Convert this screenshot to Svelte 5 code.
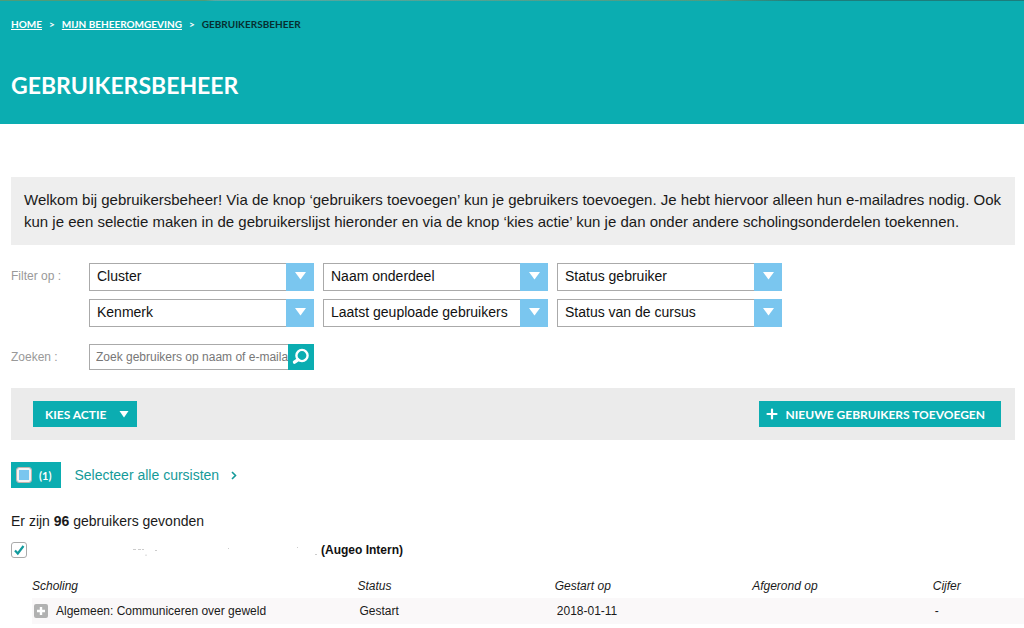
<script>
  const filters = [
    { id: 'cluster', label: 'Cluster' },
    { id: 'onderdeel', label: 'Naam onderdeel' },
    { id: 'status-gebruiker', label: 'Status gebruiker' },
    { id: 'kenmerk', label: 'Kenmerk' },
    { id: 'laatst', label: 'Laatst geuploade gebruikers' },
    { id: 'status-cursus', label: 'Status van de cursus' }
  ];
  const trainings = [
    { name: 'Algemeen: Communiceren over geweld', status: 'Gestart', started: '2018-01-11', finished: '', grade: '-' }
  ];
  let allSelected = $state(false);
  let userSelected = $state(true);
</script>

<header>
  <nav aria-label="Kruimelpad">
    <a href="#home">HOME</a>
    <span>&gt;</span>
    <a href="#beheer">MIJN BEHEEROMGEVING</a>
    <span>&gt;</span>
    <span class="current">GEBRUIKERSBEHEER</span>
  </nav>
  <h1>GEBRUIKERSBEHEER</h1>
</header>

<main>
  <p class="intro">
    Welkom bij gebruikersbeheer! Via de knop ‘gebruikers toevoegen’ kun je gebruikers toevoegen. Je hebt hiervoor alleen hun e-mailadres nodig. Ook kun je een selectie maken in de gebruikerslijst hieronder en via de knop ‘kies actie’ kun je dan onder andere scholingsonderdelen toekennen.
  </p>

  <div class="line">
    <span class="caption" id="filter-caption">Filter op :</span>
    <div class="filters" role="group" aria-labelledby="filter-caption">
      {#each filters as f (f.id)}
        <div class="select">
          <select id={f.id} aria-label={f.label}>
            <option>{f.label}</option>
          </select>
          <svg class="arrow" viewBox="0 0 28 28" aria-hidden="true">
            <rect width="28" height="28" fill="#7ac6ef" />
            <path d="M9 9h11l-5.500 7.500z" fill="#fff" />
          </svg>
        </div>
      {/each}
    </div>
  </div>

  <form class="line search-line" onsubmit={(e) => e.preventDefault()}>
    <label class="caption" for="zoek">Zoeken :</label>
    <div class="search">
      <input id="zoek" type="text" placeholder="Zoek gebruikers op naam of e-mailadres" />
      <button type="submit" aria-label="Zoeken">
        <svg viewBox="0 0 26 26" width="26" height="26" aria-hidden="true">
          <circle cx="14" cy="11.500" r="5.600" fill="none" stroke="#fff" stroke-width="2.400" />
          <path d="M9.800 15.800l-3.300 2.400" stroke="#fff" stroke-width="3.400" stroke-linecap="round" />
        </svg>
      </button>
    </div>
  </form>

  <div class="actions">
    <button type="button" class="action">
      KIES ACTIE
      <svg viewBox="0 0 10 8" width="10" height="8" aria-hidden="true"><path d="M0.500 1h9L5 7.500z" fill="#fff" /></svg>
    </button>
    <button type="button" class="add">
      <svg viewBox="0 0 12 12" width="12" height="12" aria-hidden="true"><path d="M6 1.500v9M1.500 6h9" stroke="#fff" stroke-width="2.200" stroke-linecap="round" /></svg>
      NIEUWE GEBRUIKERS TOEVOEGEN
    </button>
  </div>

  <div class="selection">
    <label class="count">
      <input type="checkbox" class="all" bind:checked={allSelected} />
      (1)
    </label>
    <a href="#alle">
      Selecteer alle cursisten
      <svg viewBox="0 0 6 9" width="6" height="9" aria-hidden="true"><path d="M1 1l3.500 3.500L1 8" fill="none" stroke="#149a99" stroke-width="1.600" /></svg>
    </a>
  </div>

  <p class="found">Er zijn <strong>96</strong> gebruikers gevonden</p>

  <label class="user">
    <input type="checkbox" class="tick" bind:checked={userSelected} />
    <svg class="specks" viewBox="0 0 184 12" width="184" height="12" aria-hidden="true">
      <path d="M0 5.500h3M5 5.500h3M9 5.500h2M22 6.500h2M13 12v-1.500M95 4.500h1M164 3.500h1M182 10.500h2" stroke="#ccc" />
    </svg>
    <strong>(Augeo Intern)</strong>
  </label>
</main>

<div class="results">
  <table>
    <thead>
      <tr>
        <th class="c1">Scholing</th>
        <th class="c2">Status</th>
        <th class="c2">Gestart op</th>
        <th class="c3">Afgerond op</th>
        <th>Cijfer</th>
      </tr>
    </thead>
    <tbody>
      {#each trainings as t}
        <tr>
          <td>
            <div class="training">
              <button type="button" class="expand" aria-label="Toon details">
                <svg viewBox="0 0 14 14" width="14" height="14" aria-hidden="true">
                  <rect width="14" height="14" rx="2" fill="#b1b1b1" />
                  <path d="M7 3v8M3 7h8" stroke="#fff" stroke-width="2.400" />
                </svg>
              </button>
              {t.name}
            </div>
          </td>
          <td>{t.status}</td>
          <td>{t.started}</td>
          <td>{t.finished}</td>
          <td>{t.grade}</td>
        </tr>
      {/each}
    </tbody>
  </table>
</div>

<style>
  :global(body) {
    background: #fff;
    color: #1a1a1a;
    font-family: "Liberation Sans", Arial, sans-serif;
    font-size: 14px;
  }
  * { box-sizing: border-box; }
  button { border: 0; padding: 0; cursor: pointer; }
  svg { display: block; flex: none; }

  header {
    background: linear-gradient(90deg, #4f9c78 0, #4f9c78 20%, #58a9a5 21%, #4f9c80 70%, #1c7d7c 78%) top / 100% 1px no-repeat #0badb1;
    padding: 16px 11px 22px;
    color: #fff;
    font-family: Lato, sans-serif;
  }
  nav {
    display: flex;
    gap: 7px;
    font-size: 10px;
    line-height: 16px;
    font-weight: 700;
  }
  nav a { color: #fff; }
  nav .current { color: #062f30; }
  h1 {
    margin: 37px 0 0;
    font-size: 23px;
    line-height: 33px;
    font-weight: 700;
  }

  main { padding: 53px 9px 0 11px; }
  .intro {
    margin: 0;
    padding: 12px 13px;
    background: #eee;
    font-size: 15px;
    line-height: 22px;
  }
  .line { display: flex; margin-top: 18px; }
  .search-line { margin-top: 17px; }
  .caption {
    flex: none;
    width: 78px;
    color: #999;
    font-size: 12px;
    line-height: 26px;
  }
  .filters {
    display: grid;
    grid-template-columns: repeat(3, 225px);
    gap: 8px 9px;
  }
  .select { display: grid; }
  .select > * { grid-area: 1 / 1; }
  select {
    appearance: none;
    width: 100%;
    height: 28px;
    margin: 0;
    padding: 0 32px 2px 7px;
    border: 1px solid #aaa;
    border-radius: 0;
    background: #fff;
    color: #111;
    font: 14px "Liberation Sans", Arial, sans-serif;
  }
  .arrow {
    justify-self: end;
    width: 28px;
    height: 28px;
    pointer-events: none;
  }
  .search { display: flex; width: 225px; height: 26px; }
  .search input {
    flex: 1;
    min-width: 0;
    padding: 0 0 0 6px;
    border: 1px solid #aaa;
    border-right: 0;
    border-radius: 0;
    font: 12px "Liberation Sans", Arial, sans-serif;
  }
  .search input::placeholder { color: #777; }
  .search button { background: #0badb1; }

  .actions {
    display: flex;
    justify-content: space-between;
    margin-top: 18px;
    padding: 13px 14px 13px 22px;
    background: #ebebeb;
  }
  .actions button {
    display: flex;
    align-items: center;
    height: 26px;
    background: #0badb1;
    color: #fff;
    font: 700 12px Lato, sans-serif;
    white-space: nowrap;
  }
  .action { gap: 13px; padding: 0 8px 0 12px; }
  .add { gap: 8px; padding: 0 16px 0 7px; }

  .selection {
    display: flex;
    align-items: center;
    gap: 13px;
    margin-top: 22px;
  }
  .count {
    display: flex;
    align-items: center;
    gap: 7px;
    height: 26px;
    padding: 0 10px 0 5px;
    background: #0badb1;
    color: #fff;
    font: 700 11px Lato, sans-serif;
  }
  .all {
    appearance: none;
    width: 16px;
    height: 16px;
    margin: 0;
    border: 1px solid #c4b5ae;
    border-radius: 3px;
    background: #7ac6ef;
    box-shadow: inset 0 0 0 2px #f4f4f4;
  }
  .selection a {
    display: flex;
    align-items: center;
    gap: 12px;
    color: #149a99;
    text-decoration: none;
  }
  .found { margin: 25px 0 0; line-height: 16px; }
  .user {
    display: flex;
    align-items: center;
    margin-top: 13px;
    font-size: 12px;
    color: #111;
  }
  .tick {
    appearance: none;
    width: 16px;
    height: 16px;
    margin: 0;
    border: 1px solid #aaa;
    border-radius: 3px;
    background: #fff;
  }
  .tick:checked {
    background: #fff url("data:image/svg+xml,%3Csvg xmlns='http://www.w3.org/2000/svg' viewBox='0 0 14 14'%3E%3Cpath d='M3 7.500l2.800 3L11.500 3' fill='none' stroke='%23129b9e' stroke-width='2.200'/%3E%3C/svg%3E") center / 14px no-repeat;
  }
  .specks { margin: 0 4px 0 106px; }

  .results { margin-top: 16px; padding-left: 32px; }
  table {
    width: 100%;
    border-collapse: collapse;
    table-layout: fixed;
    font-size: 12px;
  }
  th {
    height: 24px;
    padding: 0;
    font-weight: 400;
    font-style: italic;
    text-align: left;
  }
  .c1 { width: 32.8%; }
  .c2 { width: 19.9%; }
  .c3 { width: 18.2%; }
  td { height: 26px; padding: 0 0 0 2px; background: #faf8f9; }
  .training { display: flex; align-items: center; gap: 8px; }
  .expand { background: none; }
</style>
